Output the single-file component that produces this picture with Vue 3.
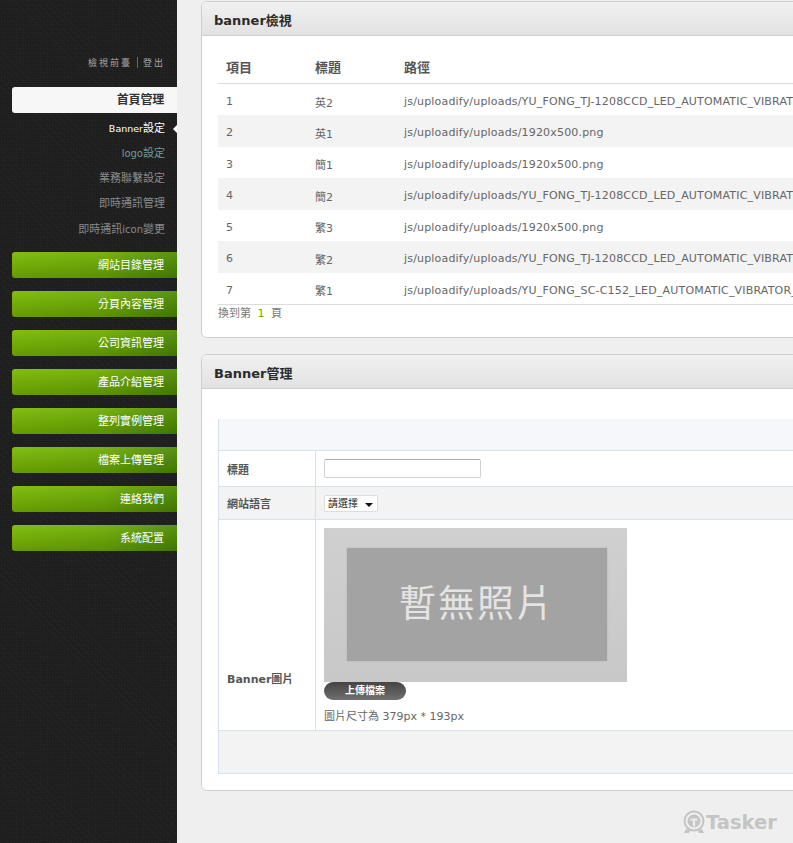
<script setup>
const subs = [
  { lat: 'Banner', t: '設定', active: true },
  { lat: 'logo', t: '設定', teal: true },
  { t: '業務聯繫設定' },
  { t: '即時通訊管理' },
  { pre: '即時通訊', lat: 'icon', t: '變更' },
]
const greens = ['網站目錄管理', '分頁內容管理', '公司資訊管理', '產品介紹管理', '整列實例管理', '檔案上傳管理', '連絡我們', '系統配置']
const longA = 'js/uploadify/uploads/YU_FONG_TJ-1208CCD_LED_AUTOMATIC_VIBRATOR_FEEDER.png'
const longB = 'js/uploadify/uploads/YU_FONG_SC-C152_LED_AUTOMATIC_VIBRATOR_FEEDER.png'
const short = 'js/uploadify/uploads/1920x500.png'
const rows = [
  ['1', '英2', longA], ['2', '英1', short], ['3', '簡1', short], ['4', '簡2', longA],
  ['5', '繁3', short], ['6', '繁2', longA], ['7', '繁1', longB],
]
</script>

<template>
  <div class="page">
    <aside class="side">
      <div class="toplinks"><span>檢視前臺</span><i></i><span>登出</span></div>
      <div class="tab">首頁管理</div>
      <ul class="subs">
        <li v-for="s in subs" :key="s.t + s.lat + s.pre" :class="{ active: s.active, teal: s.teal }">{{ s.pre }}<span class="lat">{{ s.lat }}</span>{{ s.t }}</li>
      </ul>
      <div class="greens">
        <div v-for="g in greens" :key="g" class="green">{{ g }}</div>
      </div>
    </aside>

    <main class="main">
      <section class="panel first">
        <h2 class="phead">banner檢視</h2>
        <div class="pbody list">
          <table class="grid">
            <thead>
              <tr><th class="c1">項目</th><th class="c2">標題</th><th>路徑</th></tr>
            </thead>
            <tbody>
              <tr v-for="r in rows" :key="r[0]">
                <td>{{ r[0] }}</td><td>{{ r[1] }}</td><td class="path">{{ r[2] }}</td>
              </tr>
            </tbody>
          </table>
          <div class="pager">換到第 <b>1</b> 頁</div>
        </div>
      </section>

      <section class="panel second">
        <h2 class="phead">Banner管理</h2>
        <div class="pbody form">
          <div class="formtable">
            <div class="fhead"></div>
            <div class="frow r1">
              <div class="flabel">標題</div>
              <div class="fval"><input class="inp" type="text" /></div>
            </div>
            <div class="frow r2">
              <div class="flabel">網站語言</div>
              <div class="fval"><div class="sel">請選擇</div></div>
            </div>
            <div class="frow r3">
              <div class="flabel strong">Banner圖片</div>
              <div class="fval img">
                <div class="photo"><div class="photoin">暫無照片</div></div>
                <div class="upload">上傳檔案</div>
                <div class="hint">圖片尺寸為 379px * 193px</div>
              </div>
            </div>
            <div class="ffoot"></div>
          </div>
        </div>
      </section>

      <div class="logo">
        <svg width="24" height="24" viewBox="0 0 24 24" aria-hidden="true">
          <circle cx="12" cy="11" r="9.5" fill="none" stroke="#c4c4c4" stroke-width="2" />
          <circle cx="12" cy="11" r="6.5" fill="#c4c4c4" />
          <path d="M8.500 8.500h7v2h-2.400v6h-2.200v-6H8.500z" fill="#eeeeee" />
          <path d="M4 19l-2 4h5l1-2.500M20 19l2 4h-5l-1-2.500" fill="#c4c4c4" />
        </svg>
        <span>Tasker</span>
      </div>
    </main>
  </div>
</template>

<style>
html, body { margin: 0; padding: 0; overflow: hidden; background: #efefef; }
</style>

<style scoped>
.page {
  display: flex;
  width: 793px;
  height: 843px;
  overflow: hidden;
  background: #efefef;
  font-family: "DejaVu Sans", "Noto Sans CJK TC", sans-serif;
  font-size: 11px;
  color: #666;
}
.side {
  flex: 0 0 177px;
  box-sizing: border-box;
  padding: 55px 0 0 12px;
  background-color: #1e1e1e;
  background-image:
    repeating-linear-gradient(0deg, rgba(255,255,255,.018) 0 1px, transparent 1px 2px),
    repeating-linear-gradient(90deg, rgba(0,0,0,.09) 0 1px, transparent 1px 3px),
    repeating-linear-gradient(45deg, rgba(255,255,255,.016) 0 1px, transparent 1px 5px);
}
.toplinks {
  display: flex;
  justify-content: flex-end;
  align-items: center;
  gap: 5px;
  height: 14px;
  padding-right: 12px;
  font-size: 9px;
  letter-spacing: 2px;
  color: #a8a8a8;
}
.toplinks i { width: 1px; height: 11px; background: #666; }
.tab {
  margin-top: 18px;
  height: 26px;
  line-height: 27px;
  padding-right: 13px;
  text-align: right;
  font-size: 12px;
  letter-spacing: -.2px;
  font-weight: 700;
  color: #333;
  background: #f7f7f7;
  border-radius: 3px 0 0 3px;
}
.subs { list-style: none; margin: 2.5px 0 0; padding: 0; }
.subs li {
  position: relative;
  height: 25.3px;
  line-height: 25.3px;
  padding-right: 12px;
  text-align: right;
  color: #8a8a8a;
}
.lat { font-size: 10px; }
.subs li.active { color: #fff; }
.subs li.active .lat { font-size: 9.5px; }
.subs li.active::after {
  content: "";
  position: absolute;
  right: 0;
  top: 9px;
  border: 4px solid transparent;
  border-right-color: #fff;
  border-left-width: 0;
}
.subs li.teal { color: #6f9a9a; }
.greens { display: flex; flex-direction: column; gap: 13px; margin-top: 10px; }
.green {
  height: 26px;
  line-height: 28px;
  padding-right: 13px;
  text-align: right;
  color: #fff;
  background:
    linear-gradient(180deg, rgba(255,255,255,.08), rgba(0,0,0,.16)),
    linear-gradient(90deg, #78b800 0%, #6dac00 55%, #4b8b00 100%);
  border-radius: 3px 0 0 3px;
}
.main {
  position: relative;
  flex: 1;
  min-width: 0;
  padding: 1px 0 0 24px;
}
.panel {
  box-sizing: border-box;
  width: 700px;
  background: #fff;
  border: 1px solid #cfcfcf;
  border-radius: 6px;
}
.second { margin-top: 16px; }
.phead {
  margin: 0;
  height: 33px;
  line-height: 38px;
  padding-left: 12px;
  font-size: 13px;
  font-weight: 700;
  color: #2b2b2b;
  background: linear-gradient(180deg, #f1f1f1, #e2e2e2);
  border-bottom: 1px solid #cdcdcd;
  border-radius: 5px 5px 0 0;
}
.list { padding: 13px 0 0 16px; height: 301px; box-sizing: border-box; }
.grid { width: 684px; border-collapse: collapse; table-layout: fixed; }
.grid th {
  height: 34px;
  padding: 0 0 0 8px;
  text-align: left;
  font-size: 13px;
  font-weight: 700;
  color: #555;
  border-bottom: 1px solid #dcdcdc;
}
.c1 { width: 81px; }
.c2 { width: 81px; }
.grid td {
  box-sizing: border-box;
  height: 31.5px;
  padding: 4px 0 0 8px;
  color: #666;
  white-space: nowrap;
  overflow: hidden;
}
.path { letter-spacing: .18px; }
.grid tbody tr:nth-child(even) td { background: #f3f3f3; }
.grid tbody tr:last-child td { border-bottom: 1px solid #dcdcdc; }
.pager { margin-top: 1px; line-height: 15px; color: #777; }
.pager b { color: #6aa800; font-weight: 400; margin: 0 3px; }
.form { padding: 30px 0 16px 16px; }
.formtable {
  width: 684px;
  border-left: 1px solid #d8e0f0;
  border-bottom: 1px solid #d8e0f0;
}
.fhead { height: 31px; background: #f5f7fb; border-bottom: 1px solid #d8e0f0; }
.frow { display: flex; border-bottom: 1px solid #d8e0f0; }
.r1 { height: 35px; }
.r2 { height: 32px; background: #f3f3f3; }
.r3 { height: 210px; }
.ffoot { height: 42px; background: #f3f3f3; }
.flabel {
  flex: 0 0 97px;
  box-sizing: border-box;
  padding-left: 8px;
  display: flex;
  align-items: center;
  border-right: 1px solid #d8e0f0;
  font-weight: 700;
  color: #555;
}
.strong { padding-top: 106px; }
.fval { flex: 1; padding-left: 8px; display: flex; align-items: center; }
.inp {
  box-sizing: border-box;
  width: 157px;
  height: 19px;
  margin: 0;
  padding: 0 4px;
  background: #fff;
  border: 1px solid #d0d0d0;
  border-top-color: #aaa;
  border-radius: 2px;
}
.sel {
  position: relative;
  box-sizing: border-box;
  width: 54px;
  height: 17px;
  line-height: 15px;
  padding-left: 3px;
  font-size: 10px;
  color: #222;
  background: #fff;
  border: 1px solid #ddd;
  border-radius: 2px;
}
.sel::after {
  content: "";
  position: absolute;
  right: 4px;
  top: 7px;
  border: 4px solid transparent;
  border-top: 4px solid #111;
  border-bottom-width: 0;
}
.img { flex-direction: column; align-items: flex-start; padding-top: 8px; }
.photo {
  box-sizing: border-box;
  width: 303px;
  height: 154px;
  padding: 20px 20px 21px 23px;
  background: linear-gradient(180deg, #d0d0d0, #c8c8c8);
}
.photoin {
  height: 113px;
  line-height: 113px;
  text-align: center;
  font-size: 37px;
  font-weight: 400;
  letter-spacing: 2px;
  color: #e4e4e4;
  background: #a3a3a3;
  box-shadow: 0 0 2px #b4b4b4;
}
.upload {
  width: 82px;
  height: 18px;
  line-height: 17px;
  text-align: center;
  font-size: 10px;
  font-weight: 700;
  color: #fff;
  background: linear-gradient(180deg, #444, #707070);
  border-radius: 9px;
}
.hint { margin-top: 10px; line-height: 14px; color: #666; }
.logo {
  position: absolute;
  left: 505px;
  top: 810px;
  display: flex;
  align-items: center;
  gap: 0;
  font-size: 19.5px;
  font-weight: 700;
  color: #c4c4c4;
}
</style>
